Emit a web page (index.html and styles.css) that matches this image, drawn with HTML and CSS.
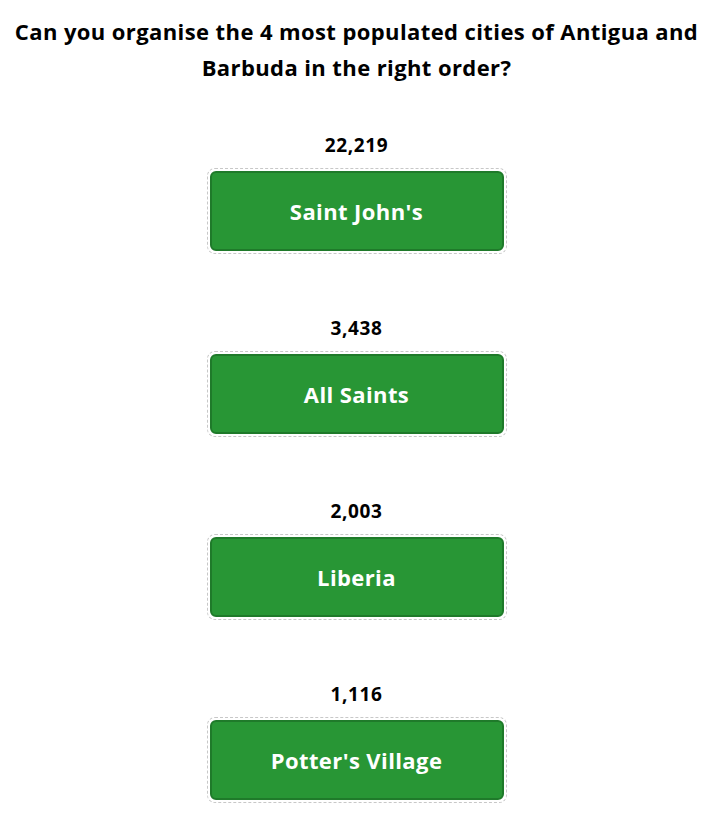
FILE: index.html
```html
<!DOCTYPE html>
<html lang="en">
<head>
<meta charset="utf-8">
<title>Antigua and Barbuda cities</title>
<link rel="stylesheet" href="styles.css">
</head>
<body>
<main class="quiz">
  <h1 class="question">Can you organise the 4 most populated cities of Antigua and Barbuda in the right order?</h1>
  <ol class="ranking">
    <li class="entry">
      <div class="population">22,219</div>
      <div class="slot"><div class="city">Saint John's</div></div>
    </li>
    <li class="entry">
      <div class="population">3,438</div>
      <div class="slot"><div class="city">All Saints</div></div>
    </li>
    <li class="entry">
      <div class="population">2,003</div>
      <div class="slot"><div class="city">Liberia</div></div>
    </li>
    <li class="entry">
      <div class="population">1,116</div>
      <div class="slot"><div class="city">Potter's Village</div></div>
    </li>
  </ol>
</main>
</body>
</html>
```
FILE: styles.css
```css
html, body {
  margin: 0;
  padding: 0;
  background: #ffffff;
}

body {
  font-family: "Open Sans", "Noto Sans", "Liberation Sans", sans-serif;
  color: #000;
}

.quiz {
  display: flex;
  flex-direction: column;
  align-items: center;
  padding-top: 13px;
}

.question {
  margin: 0;
  width: 700px;
  text-align: center;
  font-size: 22px;
  font-weight: 700;
  letter-spacing: 0.4px;
  line-height: 36px;
}

.ranking {
  list-style: none;
  margin: 0;
  padding: 0;
  margin-top: 48px;
  display: flex;
  flex-direction: column;
  align-items: center;
  gap: 62px;
}

.entry {
  display: flex;
  flex-direction: column;
  align-items: center;
  gap: 11px;
}

.population {
  font-size: 19px;
  font-weight: 700;
  letter-spacing: 0.6px;
  line-height: 24px;
}

.slot {
  box-sizing: border-box;
  width: 300px;
  height: 86px;
  padding: 2px;
  border: 1px dashed #c8c8c8;
  border-radius: 8px;
  display: flex;
}

.city {
  flex: 1;
  display: flex;
  align-items: center;
  justify-content: center;
  background: #289635;
  border: 2px solid #1f7a2a;
  border-radius: 6px;
  color: #fff;
  font-size: 22px;
  font-weight: 700;
  letter-spacing: 0.4px;
}
```
